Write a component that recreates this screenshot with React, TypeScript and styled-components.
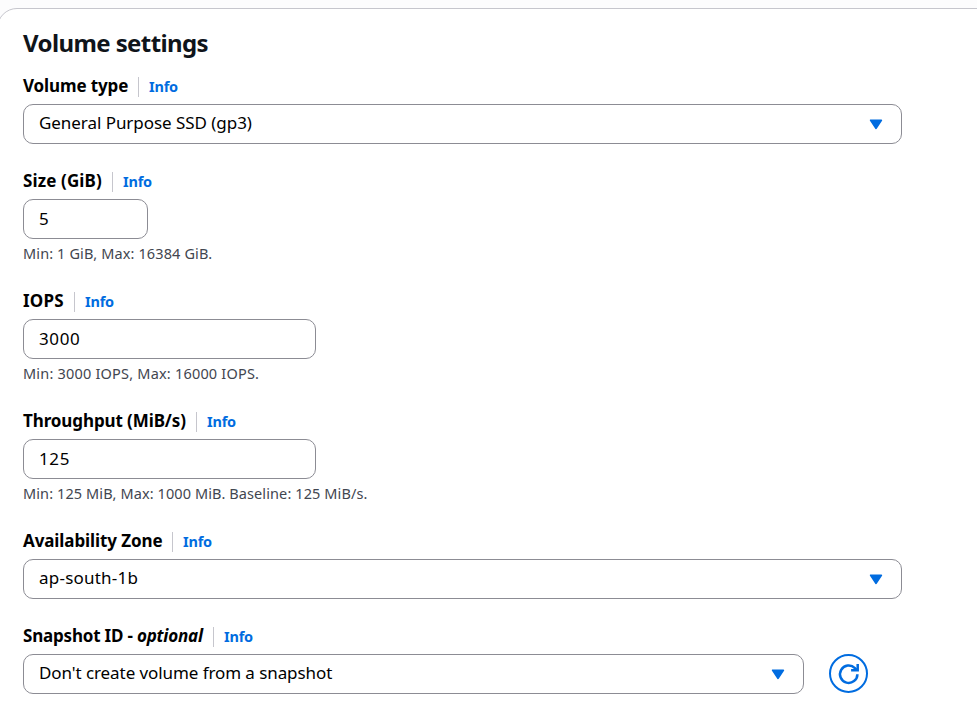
import React from 'react';
import styled, { createGlobalStyle } from 'styled-components';

const GlobalStyle = createGlobalStyle`
  html, body { margin: 0; padding: 0; overflow: hidden; background: #fcfcfd; }
  *, *::before, *::after { box-sizing: border-box; }
  body, button, input { font-family: "Amazon Ember", "Noto Sans", sans-serif; }
`;

const Page = styled.main`
  height: 712px;
  padding-top: 8px;
  overflow: hidden;
`;

const Panel = styled.section`
  width: 1010px;
  height: 760px;
  margin-left: -3px;
  padding: 19px 25px;
  background: #fff;
  border: 1px solid #c6c6cd;
  border-radius: 20px;
`;

const Title = styled.h2`
  margin: 0 0 15px;
  font-size: 24px;
  line-height: 30px;
  font-weight: 700;
  letter-spacing: -0.6px;
  color: #0f141a;
  white-space: nowrap;
`;

const Form = styled.form`
  display: flex;
  flex-direction: column;
  gap: 24px;
  width: 879px;
`;

const Field = styled.div`
  display: flex;
  flex-direction: column;
`;

const LabelRow = styled.div`
  display: flex;
  align-items: center;
  height: 25px;
  margin-bottom: 6px;
`;

const Label = styled.label<{ $width: number; $spacing: number }>`
  width: ${(p) => p.$width}px;
  font-size: 17px;
  line-height: 25px;
  font-weight: 700;
  letter-spacing: ${(p) => p.$spacing}px;
  color: #000;
  white-space: nowrap;
`;

const InfoLink = styled.a`
  height: 20px;
  margin: 2px 0 0 10px;
  padding-left: 10px;
  border-left: 1px solid #c6c6cd;
  font-size: 14.5px;
  line-height: 19px;
  font-weight: 700;
  letter-spacing: -0.2px;
  color: #006ce0;
  text-decoration: none;
`;

const ControlRow = styled.div`
  display: flex;
  align-items: center;
`;

const Select = styled.button<{ $width: number; $spacing: number }>`
  display: flex;
  align-items: center;
  justify-content: space-between;
  width: ${(p) => p.$width}px;
  height: 40px;
  padding: 0 18px 4px 15px;
  border: 1px solid #8c8c94;
  border-radius: 10px;
  background: #fff;
  color: #000;
  font-size: 17px;
  line-height: 25px;
  letter-spacing: ${(p) => p.$spacing}px;
  white-space: nowrap;
`;

const Input = styled.input<{ $width: number }>`
  width: ${(p) => p.$width}px;
  height: 40px;
  padding: 0 15px 2px;
  border: 1px solid #8c8c94;
  border-radius: 10px;
  background: #fff;
  color: #000;
  font-size: 17px;
  letter-spacing: 0.6px;
  outline: none;
`;

const Hint = styled.div<{ $spacing: number }>`
  height: 20px;
  margin: 4px 0 1px;
  font-size: 14.5px;
  line-height: 20px;
  letter-spacing: ${(p) => p.$spacing}px;
  color: #424650;
  white-space: nowrap;
`;

const RefreshButton = styled.button`
  display: flex;
  align-items: center;
  justify-content: center;
  width: 40px;
  height: 40px;
  margin-left: 25px;
  padding: 0;
  border: 0;
  background: transparent;
`;

const Caret = styled.svg`
  margin-top: 4px;
  flex: none;
`;

function CaretIcon() {
  return (
    <Caret width="14" height="11" viewBox="0 0 14 11" aria-hidden="true">
      <path d="M1.7 1.3h10.6L7 9.3z" fill="#006ce0" stroke="#006ce0" strokeWidth="1.8" strokeLinejoin="round" />
    </Caret>
  );
}

function RefreshIcon() {
  return (
    <svg width="40" height="40" viewBox="0 0 40 40" fill="none" stroke="#006ce0" aria-hidden="true">
      <circle cx="19.5" cy="19.5" r="18.5" strokeWidth="2" />
      <path d="M28.4 20.2a8.7 8.7 0 1 1-2.5-6.1l2 2" strokeWidth="2.5" />
      <path d="M28.7 10v6.3h-6.6" strokeWidth="2.5" />
    </svg>
  );
}

interface FieldLabelProps {
  children: React.ReactNode;
  width: number;
  spacing?: number;
}

function FieldLabel({ children, width, spacing = 0 }: FieldLabelProps) {
  return (
    <LabelRow>
      <Label $width={width} $spacing={spacing}>{children}</Label>
      <InfoLink>Info</InfoLink>
    </LabelRow>
  );
}

export default function App() {
  return (
    <>
      <GlobalStyle />
      <Page>
        <Panel>
          <Title>Volume settings</Title>
          <Form>
            <Field>
              <FieldLabel width={105} spacing={-0.12}>Volume type</FieldLabel>
              <Select type="button" $width={879} $spacing={-0.05}>General Purpose SSD (gp3)<CaretIcon /></Select>
            </Field>
            <Field>
              <FieldLabel width={79} spacing={0.12}>Size (GiB)</FieldLabel>
              <Input $width={125} defaultValue="5" />
              <Hint $spacing={0.12}>Min: 1 GiB, Max: 16384 GiB.</Hint>
            </Field>
            <Field>
              <FieldLabel width={41} spacing={0.25}>IOPS</FieldLabel>
              <Input $width={293} defaultValue="3000" />
              <Hint $spacing={0.2}>Min: 3000 IOPS, Max: 16000 IOPS.</Hint>
            </Field>
            <Field>
              <FieldLabel width={163} spacing={-0.1}>Throughput (MiB/s)</FieldLabel>
              <Input $width={293} defaultValue="125" />
              <Hint $spacing={0.1}>Min: 125 MiB, Max: 1000 MiB. Baseline: 125 MiB/s.</Hint>
            </Field>
            <Field>
              <FieldLabel width={139} spacing={-0.1}>Availability Zone</FieldLabel>
              <Select type="button" $width={879} $spacing={0.22}>ap-south-1b<CaretIcon /></Select>
            </Field>
            <Field>
              <FieldLabel width={180} spacing={-0.2}>Snapshot ID - <i>optional</i></FieldLabel>
              <ControlRow>
                <Select type="button" $width={781} $spacing={-0.08}>Don't create volume from a snapshot<CaretIcon /></Select>
                <RefreshButton type="button" aria-label="Refresh snapshots"><RefreshIcon /></RefreshButton>
              </ControlRow>
            </Field>
          </Form>
        </Panel>
      </Page>
    </>
  );
}
